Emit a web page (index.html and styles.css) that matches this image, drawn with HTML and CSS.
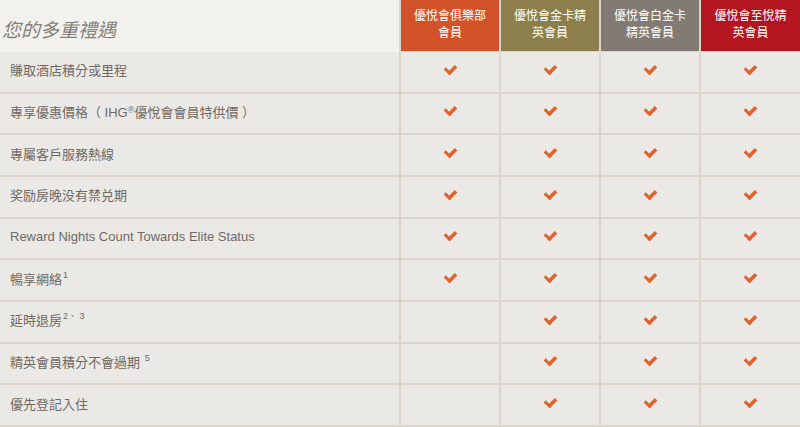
FILE: index.html
```html
<!DOCTYPE html>
<html lang="zh-Hant">
<head>
<meta charset="utf-8">
<link rel="stylesheet" href="styles.css">
</head>
<body>
<div class="table">
  <div class="head-title">您的多重禮遇</div>
  <div class="tier tier-club">優悅會俱樂部<br>會員</div>
  <div class="tier tier-gold">優悅會金卡精<br>英會員</div>
  <div class="tier tier-plat">優悅會白金卡<br>精英會員</div>
  <div class="tier tier-spire">優悅會至悅精<br>英會員</div>

  <div class="label"><span>賺取酒店積分或里程</span></div>
  <div class="cell"><span class="check"></span></div><div class="cell"><span class="check"></span></div><div class="cell"><span class="check"></span></div><div class="cell"><span class="check"></span></div>

  <div class="label"><span>專享優惠價格（ IHG<sup class="reg">®</sup>優悅會會員特供價 ）</span></div>
  <div class="cell"><span class="check"></span></div><div class="cell"><span class="check"></span></div><div class="cell"><span class="check"></span></div><div class="cell"><span class="check"></span></div>

  <div class="label"><span>專屬客戶服務熱線</span></div>
  <div class="cell"><span class="check"></span></div><div class="cell"><span class="check"></span></div><div class="cell"><span class="check"></span></div><div class="cell"><span class="check"></span></div>

  <div class="label"><span>奖励房晚没有禁兑期</span></div>
  <div class="cell"><span class="check"></span></div><div class="cell"><span class="check"></span></div><div class="cell"><span class="check"></span></div><div class="cell"><span class="check"></span></div>

  <div class="label"><span>Reward Nights Count Towards Elite Status</span></div>
  <div class="cell"><span class="check"></span></div><div class="cell"><span class="check"></span></div><div class="cell"><span class="check"></span></div><div class="cell"><span class="check"></span></div>

  <div class="label"><span>暢享網絡<sup>1</sup></span></div>
  <div class="cell"><span class="check"></span></div><div class="cell"><span class="check"></span></div><div class="cell"><span class="check"></span></div><div class="cell"><span class="check"></span></div>

  <div class="label"><span>延時退房<sup>2、 3</sup></span></div>
  <div class="cell"></div><div class="cell"><span class="check"></span></div><div class="cell"><span class="check"></span></div><div class="cell"><span class="check"></span></div>

  <div class="label"><span>精英會員積分不會過期 <sup>5</sup></span></div>
  <div class="cell"></div><div class="cell"><span class="check"></span></div><div class="cell"><span class="check"></span></div><div class="cell"><span class="check"></span></div>

  <div class="label"><span>優先登記入住</span></div>
  <div class="cell"></div><div class="cell"><span class="check"></span></div><div class="cell"><span class="check"></span></div><div class="cell"><span class="check"></span></div>
</div>
</body>
</html>
```

FILE: styles.css
```css
html, body {
  margin: 0;
  padding: 0;
  background: #f3f1ed;
  overflow: hidden;
}

body {
  font-family: "Liberation Sans", Arial, "Noto Sans CJK TC", sans-serif;
  color: #6f6a64;
}

.table {
  display: grid;
  grid-template-columns: 399px 98px 98px 98px 99px;
  grid-template-rows: 50px repeat(9, 39.67px);
  column-gap: 2px;
  row-gap: 2px;
  width: 800px;
  background: #dbd5cc;
  padding-bottom: 2px;
}

.head-title {
  background: #f3f1ed;
  font-size: 19px;
  font-style: italic;
  color: #858079;
  display: flex;
  align-items: center;
  padding: 4px 0 0 2px;
  box-sizing: border-box;
  margin-bottom: -2px;
}

.tier {
  color: #fff;
  font-size: 12px;
  line-height: 17px;
  text-align: center;
  padding-top: 8px;
  box-sizing: border-box;
  margin-bottom: -1px;
}

.tier-club { background: #d2532a; }
.tier-gold { background: #8c7f4b; }
.tier-plat { background: #817b74; }
.tier-spire { background: #b3161f; }

.label {
  background: #ebe9e5;
  font-size: 13px;
  display: flex;
  align-items: center;
  padding: 0 0 4px 10px;
  box-sizing: border-box;
}

.label sup {
  font-size: 9px;
  line-height: 0;
  vertical-align: 6px;
  margin-left: 1px;
}

.label sup.reg {
  vertical-align: 4px;
  margin-left: 0;
}

.cell {
  background: #ebe9e5;
  display: flex;
  align-items: center;
  justify-content: center;
  padding-bottom: 4px;
  box-sizing: border-box;
}

.check {
  display: block;
  width: 4px;
  height: 8px;
  border-right: 3px solid #e0622c;
  border-bottom: 3px solid #e0622c;
  transform: rotate(45deg) scaleX(1.2);
  margin-top: -3px;
}
```
